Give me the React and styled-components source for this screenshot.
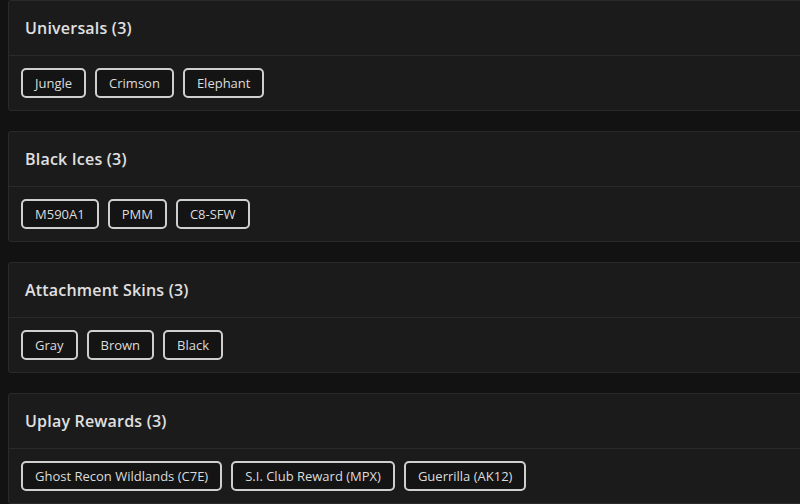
import React from 'react';
import styled, { createGlobalStyle } from 'styled-components';

const GlobalStyle = createGlobalStyle`
	html, body {
		margin: 0;
		padding: 0;
		background: #121212;
	}
	body {
		font-family: 'Open Sans', 'DejaVu Sans', sans-serif;
		color: #e8e8e8;
		overflow: hidden;
	}
`;

const Page = styled.div`
	padding: 0 0 0 8px;
	display: flex;
	flex-direction: column;
	gap: 20px;
	width: 820px;
`;

const Card = styled.section`
	background: #1b1b1b;
	border: 1px solid #2a2a2a;
	border-radius: 3px;
`;

const CardHeader = styled.div`
	height: 54px;
	padding: 0 16px;
	display: flex;
	align-items: center;
	border-bottom: 1px solid #2a2a2a;
`;

const Title = styled.h2`
	margin: 0 0 1px;
	font-size: 16px;
	font-weight: 600;
	color: #e0e0e0;
	letter-spacing: 0.2px;
`;

const CardBody = styled.div`
	display: flex;
	gap: 9px;
	padding: 12px;
`;

const Tag = styled.button`
	height: 30px;
	padding: 0 12px;
	background: #141414;
	border: 2px solid #cfcfcf;
	border-radius: 5px;
	color: #dcdcdc;
	font-family: inherit;
	font-size: 13px;
	line-height: 26px;
	cursor: pointer;
`;

const groups = [
	{ title: 'Universals', items: ['Jungle', 'Crimson', 'Elephant'] },
	{ title: 'Black Ices', items: ['M590A1', 'PMM', 'C8-SFW'] },
	{ title: 'Attachment Skins', items: ['Gray', 'Brown', 'Black'] },
	{ title: 'Uplay Rewards', items: ['Ghost Recon Wildlands (C7E)', 'S.I. Club Reward (MPX)', 'Guerrilla (AK12)'] },
];

const App = () => (
	<>
		<GlobalStyle />
		<Page>
			{groups.map((group) => (
				<Card key={group.title}>
					<CardHeader>
						<Title>{group.title} ({group.items.length})</Title>
					</CardHeader>
					<CardBody>
						{group.items.map((item) => (
							<Tag key={item}>{item}</Tag>
						))}
					</CardBody>
				</Card>
			))}
		</Page>
	</>
);

export default App;
